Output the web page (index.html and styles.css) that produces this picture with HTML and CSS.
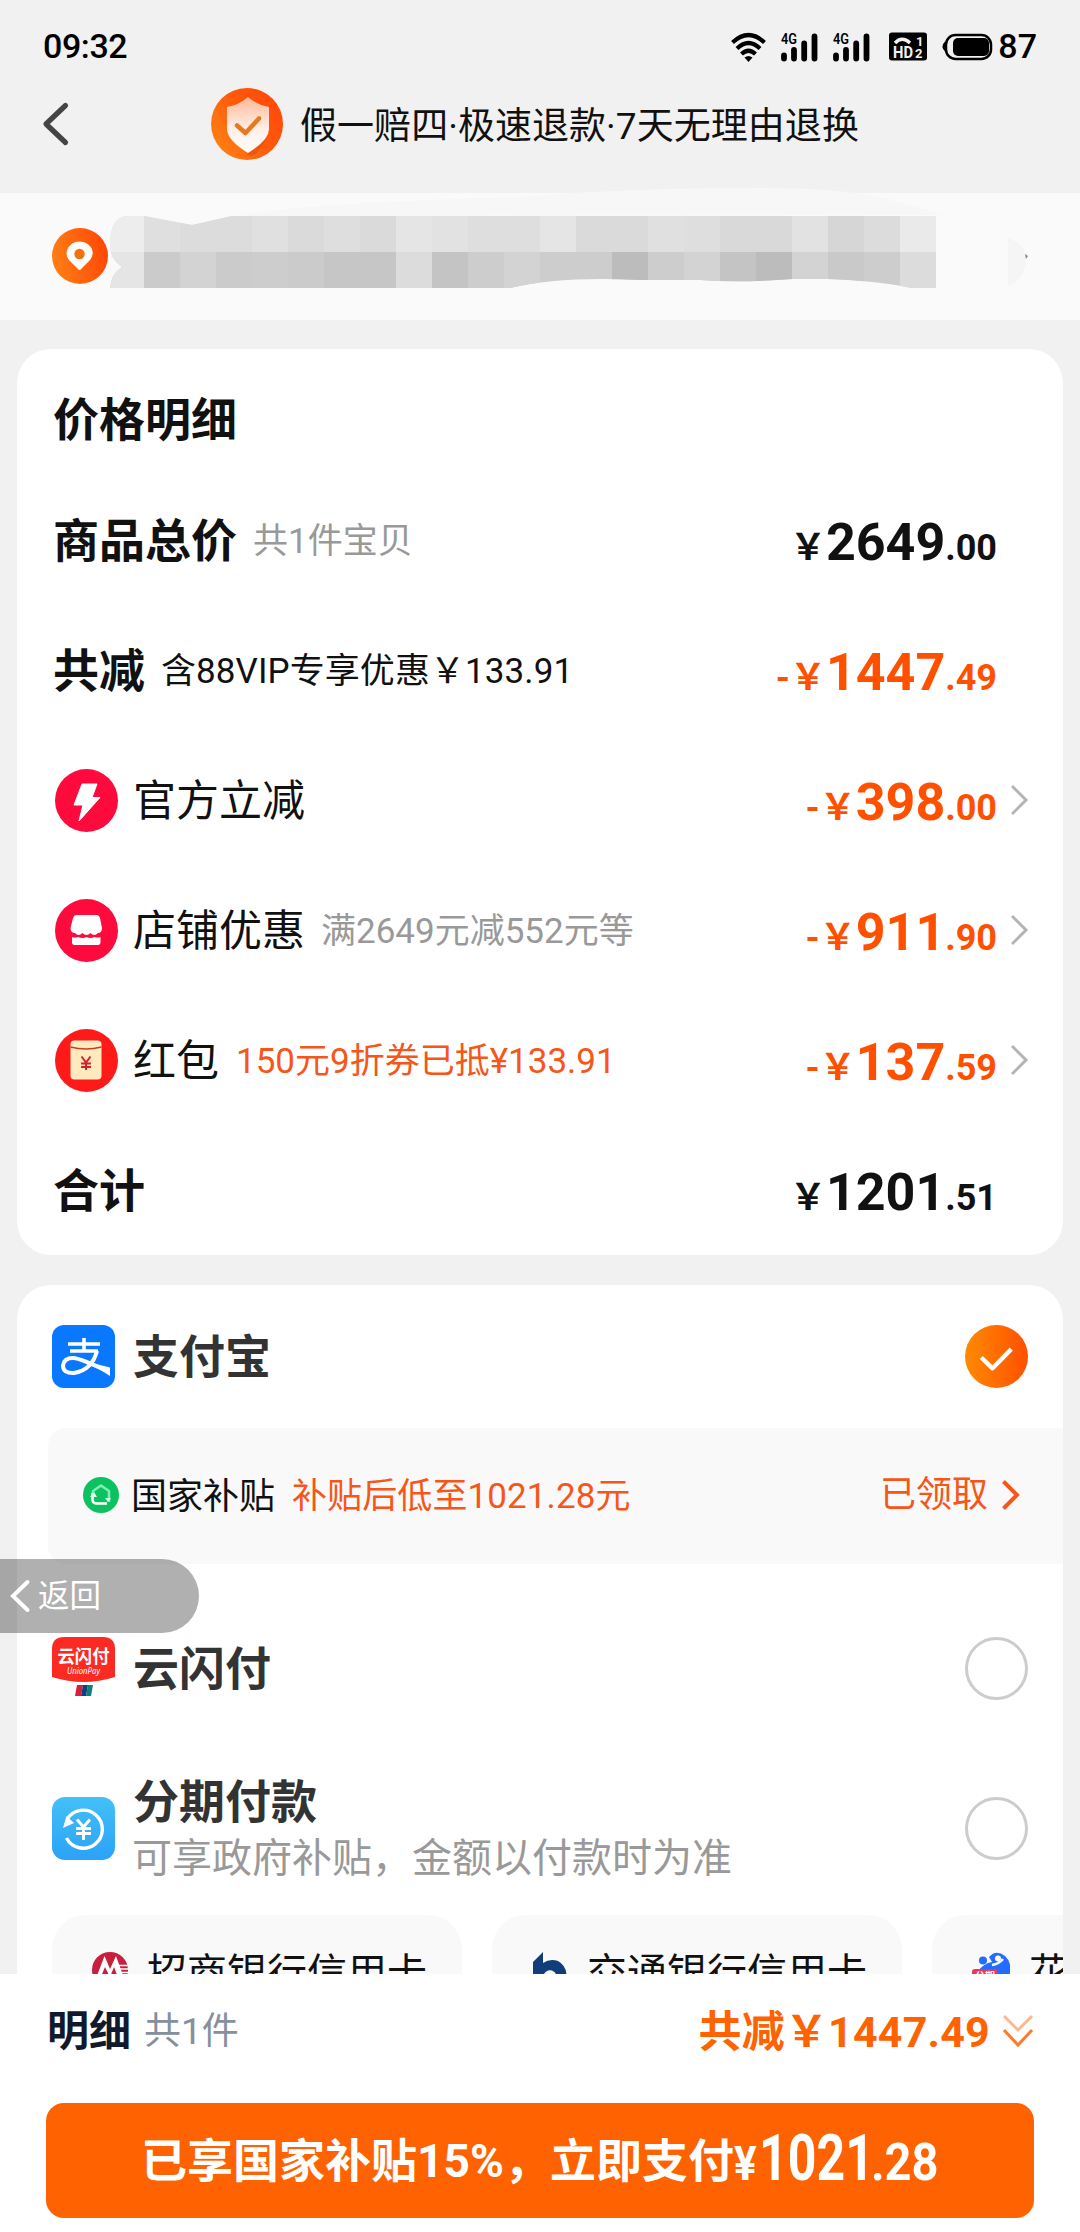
FILE: index.html
```html
<!DOCTYPE html>
<html lang="zh-CN">
<head>
<meta charset="utf-8">
<title>确认订单</title>
<link rel="stylesheet" href="styles.css">
</head>
<body>
<div class="screen">
  <header class="status">
    <span class="clock">09:32</span>
    <div class="status-right">
      <svg class="status-icons" width="264" height="34" viewBox="730 28 264 34">
        <g fill="none" stroke="#000" stroke-width="4.2">
          <path d="M733.500 41.500Q749.500 26.500 765.500 41.500"/>
          <path d="M738 47.500Q749.500 36.500 761 47.500"/>
          <path d="M742.500 53Q749.500 46.500 756.500 53"/>
        </g>
        <path d="M745.500 56.500Q749.500 53.500 753.500 56.500L749.500 61Z"/>
        <g id="signal">
          <text x="782" y="42.500" class="net" textLength="16" lengthAdjust="spacingAndGlyphs">4G</text>
          <g stroke="#000" stroke-width="5.800" stroke-linecap="round"><path d="M785 54.500V57.500M795 49V57.500M805.200 42.500V57.500M815.500 35.500V57.500"/></g>
        </g>
        <use href="#signal" x="52"/>
        <rect x="890" y="31.500" width="38" height="28" rx="3"/>
        <path d="M896 42Q903 34.500 911 42" fill="none" stroke="#f1f1f1" stroke-width="3.400"/>
        <text x="894" y="57" class="hd" textLength="20" lengthAdjust="spacingAndGlyphs">HD</text>
        <text x="917" y="44.500" class="sim">1</text>
        <text x="916" y="57" class="sim">2</text>
        <rect x="947" y="34" width="45" height="24" rx="9.500" fill="none" stroke="#000" stroke-width="2.500"/>
        <rect x="954" y="37" width="36" height="18" rx="5"/>
        <path d="M946 40.500Q941 45.500 946 50.500Z"/>
      </svg>
      <span class="battery-level">87</span>
    </div>
  </header>

  <nav class="topbar">
    <svg class="back" width="30" height="46" viewBox="0 0 30 46"><path d="M24.500 4.500L5 23L24.500 41.500" fill="none" stroke="#444" stroke-width="5.200" stroke-linecap="round" stroke-linejoin="round"/></svg>
    <svg class="shield" width="72" height="72" viewBox="0 0 72 72">
      <defs>
        <linearGradient id="warm" x1="0" y1="1" x2="1" y2=".3"><stop offset="0" stop-color="#ff8b14"/><stop offset=".6" stop-color="#ff5a0c"/><stop offset="1" stop-color="#ff4a08"/></linearGradient>
        <linearGradient id="shieldFill" x1="0" y1="0" x2="0" y2="1"><stop offset="0" stop-color="#ffb796"/><stop offset=".55" stop-color="#ffeee6"/><stop offset="1" stop-color="#fff"/></linearGradient>
        <linearGradient id="pinFill" x1="0" y1=".6" x2="1" y2=".4"><stop offset="0" stop-color="#ff7f14"/><stop offset="1" stop-color="#ff4706"/></linearGradient>
      </defs>
      <circle cx="36" cy="36" r="36" fill="url(#warm)"/>
      <path d="M56 50L47 64Q42 70 36 67L37 60Z" fill="#dd4a0c" opacity=".5"/>
      <path d="M37 9Q46 17 58 19V41Q58 52 37 65Q16 52 16 41V19Q28 17 37 9Z" fill="url(#shieldFill)"/>
      <path d="M26 37.500L34.500 45L48 30.500" fill="none" stroke="#e8781e" stroke-width="4.500" stroke-linecap="round" stroke-linejoin="round"/>
    </svg>
    <span class="promise">假一赔四·极速退款·7天无理由退换</span>
  </nav>

  <section class="address">
    <svg class="address-art" width="1080" height="133" viewBox="0 187 1080 133">
      <defs>
        <clipPath id="blurEdge"><path d="M110 245Q110 216 128 216H144L192 225L232 216H936V288H911Q880 281 828 279H792Q740 283 700 280H640Q560 276 510 288H110Q111 274 122 267Q110 259 110 245Z"/></clipPath>
      </defs>
      <path d="M240 216Q300 203 520 197Q620 188 760 188Q850 188 890 200L945 215Z" fill="#f7f7f7"/>
      <circle cx="80" cy="256" r="28" fill="url(#pinFill)"/>
      <path d="M79.500 270L69.500 260Q65 254 68.500 248Q72 242 79.500 242Q87 242 91 248Q94 254 89.500 260Z" fill="#fff" stroke="#fff" stroke-width="1" stroke-linejoin="round"/>
      <circle cx="79.500" cy="254" r="5.200" fill="#f5700f"/>
      <g clip-path="url(#blurEdge)" shape-rendering="crispEdges">
        <path fill="#e0e0e0" d="M108 216h828v36H108z"/><path fill="#cdcdcd" d="M108 252h828v36H108z"/>
        <path fill="#ededed" d="M108 216h36v36h-36z"/><path fill="#dfdfdf" d="M144 216h36v36h-36z"/><path fill="#dcdcdc" d="M180 216h72v36h-72z"/><path fill="#dadada" d="M288 216h36v36h-36zM360 216h36v36h-36zM576 216h72v36h-72z"/><path fill="#dedede" d="M324 216h36v36h-36zM468 216h72v36h-72zM684 216h36v36h-36z"/><path fill="#e5e5e5" d="M396 216h36v36h-36zM540 216h36v36h-36z"/><path fill="#e2e2e2" d="M432 216h36v36h-36zM792 216h36v36h-36z"/><path fill="#d9d9d9" d="M720 216h72v36h-72z"/><path fill="#d6d6d6" d="M828 216h36v36h-36z"/><path fill="#dcdcdc" d="M864 216h36v36h-36z"/><path fill="#eaeaea" d="M900 216h36v36h-36z"/>
        <path fill="#e5e5e5" d="M108 252h36v36h-36z"/><path fill="#cbcbcb" d="M144 252h36v36h-36zM216 252h36v36h-36zM288 252h36v36h-36z"/><path fill="#d3d3d3" d="M180 252h36v36h-36zM504 252h36v36h-36zM684 252h36v36h-36zM792 252h36v36h-36z"/><path fill="#c6c6c6" d="M324 252h72v36h-72z"/><path fill="#dcdcdc" d="M396 252h36v36h-36zM900 252h36v36h-36z"/><path fill="#c4c4c4" d="M432 252h36v36h-36zM720 252h36v36h-36z"/><path fill="#bcbcbc" d="M612 252h36v36h-36zM756 252h36v36h-36z"/><path fill="#c9c9c9" d="M828 252h36v36h-36z"/>
      </g>
      <path d="M1008 238Q1026 244 1026 260Q1026 278 1008 287Z" fill="#f5f5f5"/>
      <path d="M1025 254L1028 256L1026 259Z" fill="#888"/>
    </svg>
  </section>

  <main class="content">
    <section class="card prices">
      <h2 class="card-title">价格明细</h2>
      <div class="row"><b class="strong">商品总价</b><span class="note">共1件宝贝</span><span class="amount"><small>￥</small>2649<small>.00</small></span></div>
      <div class="row"><b class="strong">共减</b><span class="note dark">含88VIP专享优惠￥133.91</span><span class="amount cut"><small><i class="minus">-</i>￥</small>1447<small>.49</small></span></div>
      <div class="row item">
        <svg class="badge" width="63" height="63" viewBox="0 0 63 63"><circle cx="31.500" cy="31.500" r="31.500" fill="#ff0a3c"/><path d="M27 15H42L37 28.500H45L24 52L28 36H19Z" fill="#fff" stroke="#fff" stroke-width="1" stroke-linejoin="round"/></svg>
        <span class="label">官方立减</span><span class="amount cut"><small><i class="minus">-</i>￥</small>398<small>.00</small></span>
        <svg class="more" width="18" height="32" viewBox="0 0 18 32"><path d="M1 2L15 16L1 30" fill="none" stroke="#b4b4b4" stroke-width="3"/></svg>
      </div>
      <div class="row item">
        <svg class="badge" width="63" height="63" viewBox="0 0 63 63"><circle cx="31.500" cy="31.500" r="31.500" fill="#ff0a3c"/><path d="M21 16H42Q44 16 45 19L47 29Q47 34 43 34Q39 38 35.500 34Q31.500 38 27.500 34Q23.500 38 20 34Q15.500 34 15.500 29L18 19Q19 16 21 16Z" fill="#fff"/><path d="M17 38Q20 39 23 38Q27.500 40 31.500 38Q35.500 40 39.500 38Q43 39 45.500 38V43Q45.500 46 43 46H19.500Q17 46 17 43Z" fill="#fff"/></svg>
        <span class="label">店铺优惠</span><span class="note">满2649元减552元等</span><span class="amount cut"><small><i class="minus">-</i>￥</small>911<small>.90</small></span>
        <svg class="more" width="18" height="32" viewBox="0 0 18 32"><path d="M1 2L15 16L1 30" fill="none" stroke="#b4b4b4" stroke-width="3"/></svg>
      </div>
      <div class="row item">
        <svg class="badge" width="63" height="63" viewBox="0 0 63 63"><circle cx="31.500" cy="31.500" r="31.500" fill="#ff1a1a"/><rect x="15.500" y="11.500" width="31" height="39" rx="4" fill="#ffeac0"/><path d="M15.500 18Q31 22 46.500 18" fill="none" stroke="#c8401e" stroke-width="1.600"/><path d="M26.500 27.500L31 33.500L35.500 27.500M31 33.500V41M26 34.500H36M26 38H36" fill="none" stroke="#d81f2a" stroke-width="2"/></svg>
        <span class="label">红包</span><span class="note hot">150元9折券已抵¥133.91</span><span class="amount cut"><small><i class="minus">-</i>￥</small>137<small>.59</small></span>
        <svg class="more" width="18" height="32" viewBox="0 0 18 32"><path d="M1 2L15 16L1 30" fill="none" stroke="#b4b4b4" stroke-width="3"/></svg>
      </div>
      <div class="row"><b class="strong">合计</b><span class="amount"><small>￥</small>1201<small>.51</small></span></div>
    </section>

    <section class="card payments">
      <div class="pay alipay">
        <svg width="63" height="63" viewBox="0 0 63 63"><rect width="63" height="63" rx="12" fill="#0a77ff"/><path d="M16 19H48M32 13V26M18 26H46" fill="none" stroke="#fff" stroke-width="3.600"/><path d="M45 26Q40 45 22 48Q11 48.500 11 40.500Q12 33 21 33Q28 33 57 47" fill="none" stroke="#fff" stroke-width="4"/><path d="M36 37L58 42.500V51Z" fill="#fff"/></svg>
        <b class="pay-name">支付宝</b>
        <svg class="radio" width="63" height="63" viewBox="0 0 64 64"><defs><linearGradient id="checked"><stop offset="0" stop-color="#ff8a00"/><stop offset="1" stop-color="#ff5000"/></linearGradient></defs><circle cx="32" cy="32" r="32" fill="url(#checked)"/><path d="M16.500 33L28 44L47 24.500" fill="none" stroke="#fff" stroke-width="4.400" stroke-linejoin="round"/></svg>
      </div>
      <div class="subsidy">
        <svg width="36" height="36" viewBox="0 0 36 36"><circle cx="18" cy="18" r="18" fill="#0cc160"/><path d="M10 18.500V14L18 8.500L26 14V25" fill="none" stroke="#7df0b0" stroke-width="2.600" stroke-linejoin="round"/><path d="M9.500 16V22Q9.500 26.500 14 26.500H24" fill="none" stroke="#fff" stroke-width="2.600"/><path d="M7 20L11 15L14 20ZM22 21H28L25 25Z" fill="#d5ffe8"/></svg>
        <span class="subsidy-name">国家补贴</span><span class="subsidy-text">补贴后低至1021.28元</span>
        <span class="claimed">已领取</span>
        <svg class="claimed-more" width="20" height="32" viewBox="0 0 20 32"><path d="M2.500 2.500L16 16L2.500 29.500" fill="none" stroke="#f5561a" stroke-width="4"/></svg>
      </div>
      <div class="pay union">
        <svg width="63" height="63" viewBox="0 0 63 63"><path d="M12 0H51Q63 0 63 12V40Q47 45 31.500 45Q16 45 0 40V12Q0 0 12 0Z" fill="#fb2a22"/><text x="31.500" y="25.500" class="union-cn" text-anchor="middle" textLength="52" lengthAdjust="spacingAndGlyphs">云闪付</text><text x="31.500" y="37" class="union-en" text-anchor="middle" textLength="33" lengthAdjust="spacingAndGlyphs">UnionPay</text><path d="M25 48H31L29 59H23Z" fill="#d3203c"/><path d="M31 48H36L34 59H29Z" fill="#11407c"/><path d="M36 48H41L39 59H34Z" fill="#0c7f80"/></svg>
        <b class="pay-name">云闪付</b><span class="radio empty"></span>
      </div>
      <div class="pay install">
        <svg width="63" height="63" viewBox="0 0 63 63"><defs><linearGradient id="sky" x1="0" y1="0" x2="0" y2="1"><stop offset="0" stop-color="#43c0f8"/><stop offset="1" stop-color="#2ba2f6"/></linearGradient></defs><rect width="63" height="63" rx="13" fill="url(#sky)"/><path d="M15 22.500A19 19 0 1 1 14.500 41" fill="none" stroke="#fff" stroke-width="3.400"/><path d="M11 31L14.500 19L22 26Z" fill="#fff"/><path d="M25 22.500L31.500 30L38 22.500M31.500 30V43M24 31.500H39M24 36.500H39" fill="none" stroke="#fff" stroke-width="3"/></svg>
        <div class="pay-lines"><b class="pay-name">分期付款</b><span class="pay-note">可享政府补贴，金额以付款时为准</span></div>
        <span class="radio empty"></span>
      </div>
      <div class="chips">
        <div class="chip"><svg width="36" height="36" viewBox="0 0 36 36"><circle cx="18" cy="18" r="18" fill="#c71f3e"/><path d="M3 29L12.500 4L18 17L24 4L33 29L28.500 32L22 15L18 25L13 15L6 32Z" fill="#fff"/><path d="M27 13.500H36M28 17H36M29 20.500H36" stroke="#fff" stroke-width="1.300"/></svg><span>招商银行信用卡</span></div>
        <div class="chip"><svg width="36" height="36" viewBox="0 0 36 36"><path d="M1 10L11 0V11Q18 6 26 9Q35 14 34.500 25Q33 35 22 36H1Z" fill="#113e7b"/><path d="M11 32V24Q14 17 20 18.500Q26 21 24 28L20 34Z" fill="#fafafa"/></svg><span>交通银行信用卡</span></div>
        <div class="chip"><svg width="38" height="36" viewBox="0 0 38 36"><circle cx="11" cy="8.500" r="4" fill="#246bff"/><path d="M5 20Q12 11 20 10L17 5Q24 -3 33 4Q42 12 36 28H5Z" fill="#246bff"/><circle cx="26" cy="6.500" r="3" fill="#fafafa"/><path d="M20 13Q27 12 31 7" fill="none" stroke="#fafafa" stroke-width="2.500"/><rect x="0" y="17" width="26" height="15" rx="3" fill="#f0365b"/><text x="3" y="28" class="tag">分期</text></svg><span>花呗</span></div>
      </div>
    </section>
  </main>

  <footer class="checkout">
    <div class="summary">
      <b class="detail">明细</b><span class="count">共1件</span>
      <b class="saved">共减￥1447.49</b>
      <svg class="expand" width="32" height="36" viewBox="0 0 32 36"><path d="M2 2L16 16L30 2" fill="none" stroke="#ffb78f" stroke-width="3"/><path d="M2 16L16 31L30 16" fill="none" stroke="#ff7a2a" stroke-width="3"/></svg>
    </div>
    <button class="submit"><span>已享国家补贴15%，立即支付</span><span class="pay-yen">¥</span><span class="pay-int">1021</span><span class="pay-dec">.28</span></button>
  </footer>

  <div class="return"><svg width="22" height="34" viewBox="0 0 22 34"><path d="M18.500 3L4 17L18.500 31" fill="none" stroke="#fff" stroke-width="4" stroke-linecap="round"/></svg><span>返回</span></div>
</div>
</body>
</html>
```
FILE: styles.css
```css
* { box-sizing: border-box; }

body {
  margin: 0;
  background: #f1f1f1;
  font-family: Roboto, "Noto Sans CJK SC", sans-serif;
  color: #111;
}

.screen {
  position: relative;
  display: flex;
  flex-direction: column;
  width: 1080px;
  height: 2232px;
  overflow: hidden;
}

svg { display: block; flex: none; }
span, b { white-space: nowrap; }

.status {
  display: flex;
  justify-content: space-between;
  align-items: center;
  height: 92px;
  padding: 0 43px 0 43px;
  font-size: 34px;
  line-height: 40px;
  font-weight: 500;
  color: #000;
}
.clock { letter-spacing: -.4px; }
.status-right { display: flex; align-items: center; gap: 5px; }
.net { font: 600 14px Roboto, sans-serif; }
.hd { font: 700 17px Roboto, sans-serif; fill: #f1f1f1; }
.sim { font: 700 13px Roboto, sans-serif; fill: #f1f1f1; }

.topbar {
  display: flex;
  align-items: center;
  height: 101px;
  padding: 0 0 37px 41px;
}
.shield { margin-left: 140px; }
.promise { margin: 5px 0 0 17px; font-size: 37px; line-height: 50px; letter-spacing: .05px; }

.address { height: 127px; background: #fafafa; }
.address-art { margin-top: -6px; }

.content { height: 1654px; padding: 29px 17px 0; overflow: hidden; }
.card { background: #fff; border-radius: 34px; overflow: hidden; }

.prices { height: 906px; padding: 12px 34px 0 36px; }
.card-title { margin: 0; height: 114px; line-height: 118px; font-size: 46px; font-weight: 700; }
.row { display: flex; align-items: center; height: 130px; padding-right: 32px; }
.row.item { padding: 0 0 0 2px; }
.strong { padding-top: 2px; font-size: 46px; line-height: 60px; }
.note { padding-top: 3px; margin-left: 16px; font-size: 35px; line-height: 46px; color: #999; }
.note.dark { color: #111; letter-spacing: .08px; }
.note.hot { margin-left: 17px; color: #f5561a; }
.label { padding-top: 2px; margin-left: 15px; font-size: 43px; line-height: 56px; }
.amount { margin-left: auto; padding-top: 10px; font-size: 52px; line-height: 64px; font-weight: 700; }
.amount small { font-size: 36px; }
.amount.cut { color: #ff5000; }
.minus { font-style: normal; }
.more { margin-left: 14px; }

.payments { height: 720px; margin-top: 30px; }
.pay { display: flex; align-items: center; padding: 0 35px; }
.alipay { height: 143px; }
.union { height: 209px; }
.install { height: 111px; }
.pay-name { margin-left: 18px; font-size: 46px; line-height: 60px; color: #333; }
.pay-lines { display: flex; flex-direction: column; }
.pay-note { margin-left: 17px; font-size: 40px; line-height: 54px; color: #999; }
.radio { flex: none; margin-left: auto; }
.radio.empty { width: 63px; height: 63px; border: 3px solid #ccc; border-radius: 50%; }
.union-cn { font: 700 18px "Noto Sans CJK SC", sans-serif; fill: #fff; }
.union-en { font: italic 400 9px "Noto Sans", sans-serif; fill: #fff; }

.subsidy {
  display: flex;
  align-items: center;
  height: 136px;
  margin-left: 31px;
  padding: 0 42px 2px 35px;
  border-radius: 18px 0 0 18px;
  background: #f9f9f9;
  font-size: 36px;
  line-height: 48px;
}
.subsidy-name { margin-left: 12px; padding-top: 4px; }
.subsidy-text { margin-left: 17px; padding-top: 4px; font-size: 35px; letter-spacing: .1px; color: #f5561a; }
.claimed { margin-left: auto; color: #f5561a; }
.claimed-more { margin-left: 13px; }

.chips { display: flex; gap: 30px; margin: 31px 0 0 35px; }
.chip {
  flex: none;
  display: flex;
  align-items: center;
  width: 410px;
  height: 110px;
  padding-left: 40px;
  border-radius: 34px;
  background: #f9f9f9;
  font-size: 40px;
  line-height: 54px;
}
.chip span { margin-left: 19px; padding-top: 7px; }
.tag { font: 700 10px "Noto Sans CJK SC", sans-serif; fill: #fff; }

.checkout { height: 258px; background: #fff; }
.summary { display: flex; align-items: center; height: 129px; padding: 0 46px 13px 47px; }
.detail { font-size: 42px; line-height: 56px; color: #111a2c; }
.count { margin-left: 13px; font-size: 37px; line-height: 48px; color: #868f9e; }
.saved { margin-left: auto; font-size: 43px; line-height: 56px; letter-spacing: .2px; color: #ff6200; }
.expand { margin-left: 12px; }
.submit {
  display: flex;
  justify-content: center;
  align-items: baseline;
  width: 988px;
  height: 115px;
  margin: 0 46px;
  padding: 0;
  border: 0;
  border-radius: 18px;
  background: #ff6200;
  color: #fff;
  font: 700 46px/113px Roboto, "Noto Sans CJK SC", sans-serif;
}
.pay-yen, .pay-int, .pay-dec { display: block; position: relative; top: 3px; transform-origin: 0 50%; }
.pay-yen { width: 25px; font-size: 48px; transform: scaleX(.88); }
.pay-int { width: 112px; font-size: 65px; line-height: 100px; transform: scaleX(.77); }
.pay-dec { width: 68px; font-size: 51px; transform: scaleX(.92); }

.return {
  position: absolute;
  left: 0;
  top: 1559px;
  display: flex;
  align-items: center;
  width: 199px;
  height: 74px;
  padding-left: 9px;
  border-radius: 0 37px 37px 0;
  background: rgba(0, 0, 0, .31);
  color: #fff;
  font-size: 31.5px;
  line-height: 44px;
}
.return span { margin-left: 7px; padding-top: 2px; }
```
